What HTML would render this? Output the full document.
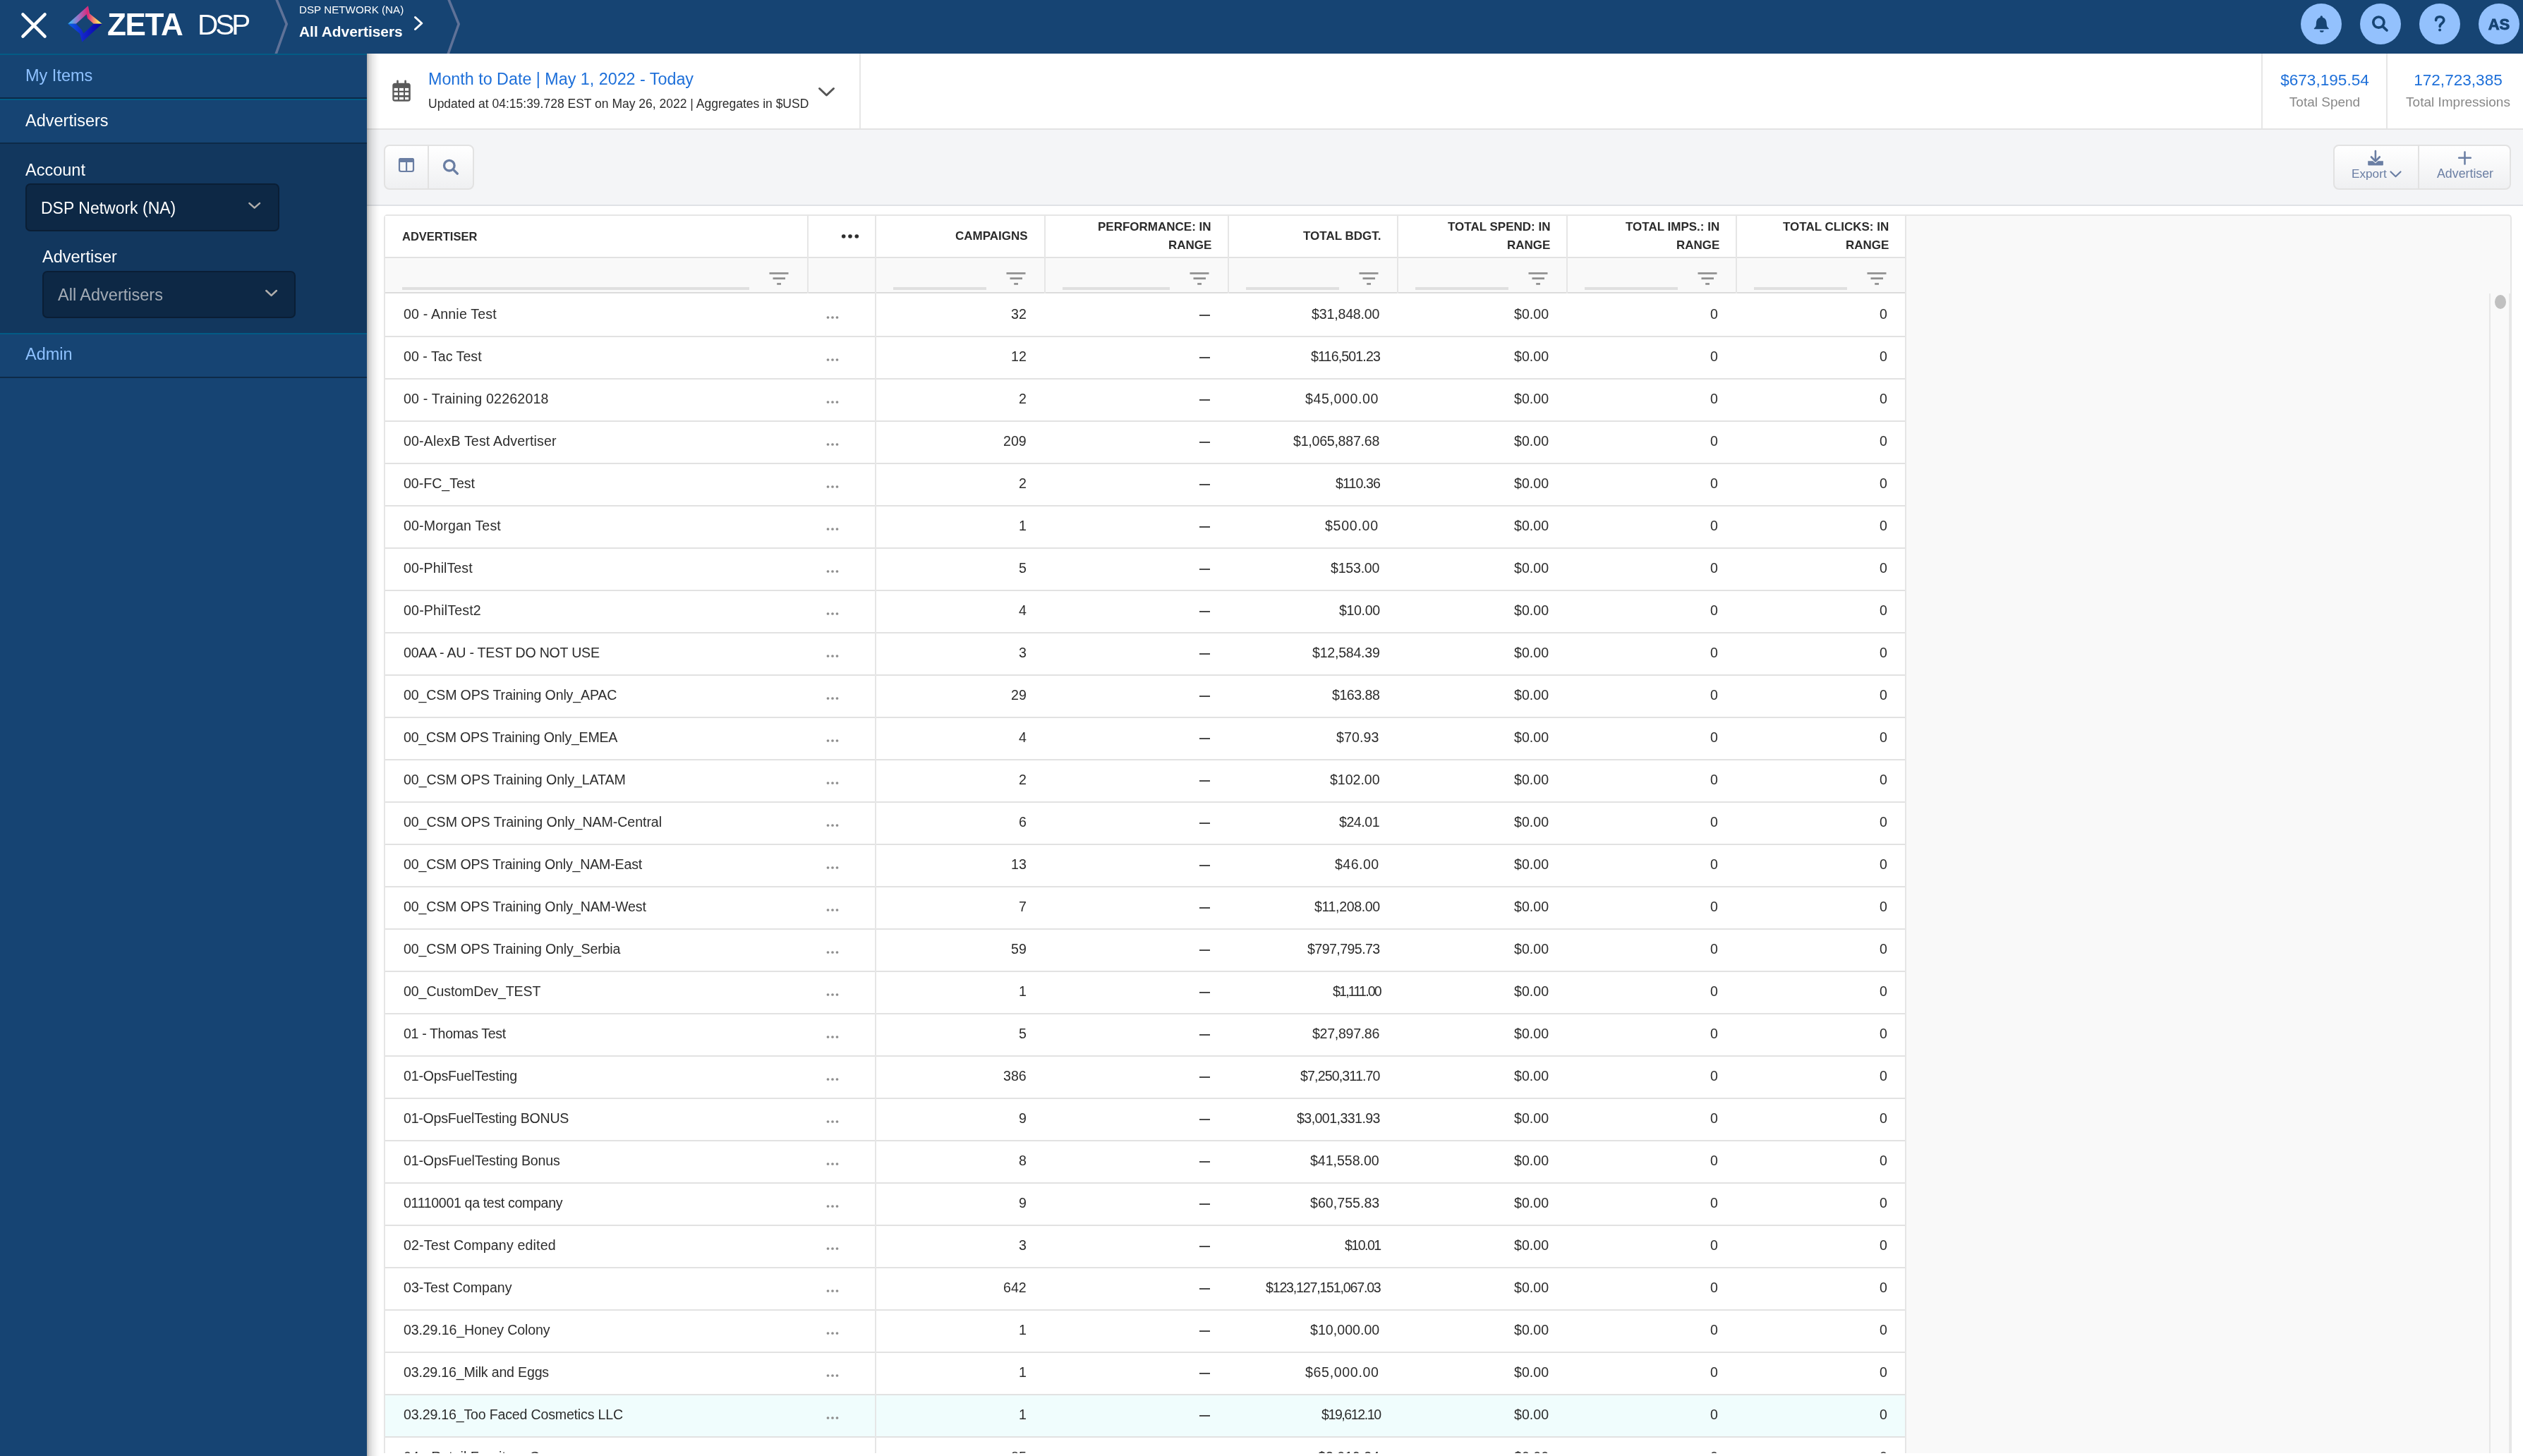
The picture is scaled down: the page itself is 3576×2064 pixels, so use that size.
<!DOCTYPE html><html><head><meta charset="utf-8"><style>
html,body{margin:0;padding:0;}
body{width:3576px;height:2064px;overflow:hidden;position:relative;background:#fff;font-family:"Liberation Sans", sans-serif;}
.t{position:absolute;white-space:nowrap;}
.r{position:absolute;}
svg{position:absolute;overflow:visible;}
.t{will-change:transform;}
</style></head><body>
<div class="r" style="left:0px;top:0px;width:3576px;height:76px;background:#164473;"></div>
<svg style="left:0;top:0" width="3576" height="76"><g stroke="#fff" stroke-width="4.4" stroke-linecap="round"><line x1="32.4" y1="20.4" x2="63.6" y2="51.6"/><line x1="63.6" y1="20.4" x2="32.4" y2="51.6"/></g><polyline points="391,-3 406.2,34 390.2,79" fill="none" stroke="#5f7298" stroke-width="3.6"/><polyline points="635,-3 650.2,34 634.2,79" fill="none" stroke="#5f7298" stroke-width="3.6"/><polyline points="588.5,24.5 597.8,33 588.5,41.5" fill="none" stroke="#fff" stroke-width="3" stroke-linecap="round" stroke-linejoin="round"/><defs><linearGradient id="gu" x1="96" y1="0" x2="145" y2="0" gradientUnits="userSpaceOnUse"><stop offset="0" stop-color="#2fc8ff"/><stop offset="0.3" stop-color="#9b74c8"/><stop offset="0.58" stop-color="#d8297a"/><stop offset="0.72" stop-color="#ee7a70"/><stop offset="0.9" stop-color="#ffe860"/><stop offset="1" stop-color="#fff860"/></linearGradient><linearGradient id="gd" x1="96" y1="0" x2="145" y2="0" gradientUnits="userSpaceOnUse"><stop offset="0" stop-color="#0a62e8"/><stop offset="0.45" stop-color="#1424c8"/><stop offset="1" stop-color="#0800a8"/></linearGradient></defs><polygon points="96.2,33.8 124.9,8.2 127,19.2 144.8,33.8 132.8,33.8 124,26 122.7,20.2 107.8,33.8" fill="url(#gu)"/><polygon points="96.2,33.8 107.8,33.8 115.5,41.8 118.4,47.6 132.8,33.8 144.8,33.8 116.4,59.6 113,47.6" fill="url(#gd)"/></svg>
<div class="t" style="left:152.00px;top:12.75px;font-size:44px;line-height:44px;color:#fff;font-weight:bold;letter-spacing:-1.3px;">ZETA</div>
<div class="t" style="left:280.00px;top:14.72px;font-size:40.5px;line-height:40.5px;color:#fff;letter-spacing:-4px;">DSP</div>
<div class="t" style="left:424.00px;top:6.13px;font-size:15.2px;line-height:15.2px;color:#fff;">DSP NETWORK (NA)</div>
<div class="t" style="left:424.00px;top:35.31px;font-size:20.9px;line-height:20.9px;color:#fff;font-weight:bold;">All Advertisers</div>
<div class="r" style="left:3261px;top:5px;width:58px;height:58px;border-radius:50%;background:#93c1fd;"></div>
<div class="r" style="left:3345px;top:5px;width:58px;height:58px;border-radius:50%;background:#93c1fd;"></div>
<div class="r" style="left:3429px;top:5px;width:58px;height:58px;border-radius:50%;background:#93c1fd;"></div>
<div class="r" style="left:3513px;top:5px;width:58px;height:58px;border-radius:50%;background:#93c1fd;"></div>
<svg style="left:0;top:0" width="3576" height="76"><path d="M3290.3,22.2 a1.7,1.7 0 0 1 1.7,1.7 v0.9 c3.6,0.9 5.4,3.9 5.6,7.6 l0.3,3.6 c0.2,1.6 1.4,2.9 2.9,4.2 a1,1 0 0 1 -0.6,1.1 h-19.8 a1,1 0 0 1 -0.6,-1.1 c1.5,-1.3 2.7,-2.6 2.9,-4.2 l0.3,-3.6 c0.2,-3.7 2,-6.7 5.6,-7.6 v-0.9 a1.7,1.7 0 0 1 1.7,-1.7 z" fill="#164473"/><path d="M3288,43.2 h5.6 a2.8,2.6 0 0 1 -5.6,0 z" fill="#164473"/><circle cx="3371.4" cy="31.6" r="7.6" fill="none" stroke="#164473" stroke-width="3.7"/><line x1="3377" y1="37.4" x2="3383" y2="43" stroke="#164473" stroke-width="3.7" stroke-linecap="round"/><path d="M3452.6,28.6 c0.2,-3.2 2.6,-4.8 5.6,-4.8 c3.2,0 5.6,1.9 5.6,4.8 c0,2.6 -1.6,3.7 -3.2,4.8 c-1.6,1.1 -2.4,2 -2.4,4.2" fill="none" stroke="#164473" stroke-width="3.6" stroke-linecap="round"/><circle cx="3458.1" cy="42.4" r="2" fill="#164473"/></svg>
<div class="t" style="left:3512.00px;width:60px;top:24.38px;font-size:22px;line-height:22px;color:#164473;text-align:center;font-weight:bold;-webkit-text-stroke:0.9px #164473;">AS</div>
<div class="r" style="left:0px;top:76px;width:520px;height:1988px;background:#164473;"></div>
<div class="r" style="left:0px;top:76px;width:520px;height:2px;background:#035b85;"></div>
<div class="r" style="left:0px;top:138px;width:520px;height:2px;background:#0d2a48;"></div>
<div class="r" style="left:0px;top:140px;width:520px;height:2px;background:#035b85;"></div>
<div class="r" style="left:0px;top:202px;width:520px;height:2px;background:#0d2a48;"></div>
<div class="r" style="left:0px;top:204px;width:520px;height:268px;background:#12375e;"></div>
<div class="r" style="left:0px;top:472px;width:520px;height:2px;background:#035b85;"></div>
<div class="r" style="left:0px;top:534px;width:520px;height:2px;background:#0d2a48;"></div>
<div class="t" style="left:36.00px;top:95.51px;font-size:23.5px;line-height:23.5px;color:#8ec1ff;">My Items</div>
<div class="t" style="left:36.00px;top:159.51px;font-size:23.5px;line-height:23.5px;color:#fff;">Advertisers</div>
<div class="t" style="left:36.00px;top:229.51px;font-size:23.5px;line-height:23.5px;color:#fff;">Account</div>
<div class="r" style="left:36px;top:260px;width:356px;height:64px;background:#0d2845;border:2px solid #0a1e35;border-radius:7px;"></div>
<div class="t" style="left:58.00px;top:283.83px;font-size:23px;line-height:23px;color:#fff;">DSP Network (NA)</div>
<div class="t" style="left:60.00px;top:353.11px;font-size:23.5px;line-height:23.5px;color:#fff;">Advertiser</div>
<div class="r" style="left:60px;top:384px;width:355px;height:63px;background:#0d2845;border:2px solid #0a1e35;border-radius:7px;"></div>
<div class="t" style="left:82.00px;top:407.11px;font-size:23.5px;line-height:23.5px;color:#a3abb5;">All Advertisers</div>
<div class="t" style="left:36.00px;top:491.11px;font-size:23.5px;line-height:23.5px;color:#8ec1ff;">Admin</div>
<svg style="left:0;top:0" width="520" height="600"><polyline points="353.4,288.1 360.7,294.6 368,288.1" fill="none" stroke="#b0aeac" stroke-width="2.5" stroke-linecap="round" stroke-linejoin="round"/><polyline points="377.3,412 384.6,418.9 391.9,412" fill="none" stroke="#b0aeac" stroke-width="2.5" stroke-linecap="round" stroke-linejoin="round"/></svg>
<div class="r" style="left:520px;top:76px;width:3056px;height:1988px;background:#fff;"></div>
<div class="r" style="left:520px;top:182px;width:3056px;height:2px;background:#e3e3e3;"></div>
<div class="r" style="left:1218px;top:76px;width:2px;height:106px;background:#e6e6e6;"></div>
<div class="r" style="left:3205px;top:76px;width:2px;height:106px;background:#e6e6e6;"></div>
<div class="r" style="left:3382px;top:76px;width:2px;height:106px;background:#e6e6e6;"></div>
<svg style="left:0;top:0" width="1300" height="300"><rect x="556.3" y="117.8" width="25.5" height="26" rx="3.5" fill="#5a5a5a"/><rect x="562.2" y="113.5" width="2.6" height="6" rx="1.3" fill="#5a5a5a"/><rect x="573.3" y="113.5" width="2.6" height="6" rx="1.3" fill="#5a5a5a"/><g fill="#fff"><rect x="558.6" y="124.9" width="5.3" height="3.8"/><rect x="566" y="124.9" width="6" height="3.8"/><rect x="574" y="124.9" width="5.2" height="3.8"/><rect x="558.6" y="131" width="5.3" height="4"/><rect x="566" y="131" width="6" height="4"/><rect x="574" y="131" width="5.2" height="4"/><rect x="558.6" y="137.8" width="5.3" height="3.4"/><rect x="566" y="137.8" width="6" height="3.4"/><rect x="574" y="137.8" width="5.2" height="3.4"/></g><polyline points="1161.5,125.5 1171.5,135 1181.5,125.5" fill="none" stroke="#555" stroke-width="3" stroke-linecap="round" stroke-linejoin="round"/></svg>
<div class="t" style="left:607.00px;top:100.98px;font-size:23.3px;line-height:23.3px;color:#1d6fd9;">Month to Date | May 1, 2022 - Today</div>
<div class="t" style="left:607.00px;top:138.79px;font-size:17.5px;line-height:17.5px;color:#2c2c2c;">Updated at 04:15:39.728 EST on May 26, 2022 | Aggregates in $USD</div>
<div class="t" style="left:3209.50px;width:170px;top:102.67px;font-size:22.6px;line-height:22.6px;color:#1d6fd9;text-align:center;">$673,195.54</div>
<div class="t" style="left:3209.50px;width:170px;top:134.72px;font-size:19px;line-height:19px;color:#888888;text-align:center;">Total Spend</div>
<div class="t" style="left:3389.00px;width:190px;top:102.67px;font-size:22.6px;line-height:22.6px;color:#1d6fd9;text-align:center;">172,723,385</div>
<div class="t" style="left:3389.00px;width:190px;top:134.72px;font-size:19px;line-height:19px;color:#888888;text-align:center;">Total Impressions</div>
<div class="r" style="left:520px;top:184px;width:3056px;height:106px;background:#f4f5f7;"></div>
<div class="r" style="left:520px;top:290px;width:3056px;height:2px;background:#dfe2e6;"></div>
<div class="r" style="left:544px;top:205px;width:124px;height:60px;border:2px solid #e2e2e2;border-radius:8px;background:linear-gradient(#ffffff,#eff0f2);"></div>
<div class="r" style="left:606px;top:207px;width:2px;height:60px;background:#e2e2e2;"></div>
<div class="r" style="left:3307px;top:205px;width:248px;height:60px;border:2px solid #e2e2e2;border-radius:8px;background:linear-gradient(#ffffff,#eff0f2);"></div>
<div class="r" style="left:3427px;top:207px;width:2px;height:60px;background:#e2e2e2;"></div>
<svg style="left:0;top:0" width="3576" height="300"><rect x="566" y="225" width="20" height="18" rx="2.5" fill="none" stroke="#6a7ea3" stroke-width="2.2"/><rect x="565" y="224" width="22" height="6" rx="2.5" fill="#6a7ea3"/><rect x="575" y="228" width="2.2" height="15" fill="#6a7ea3"/><circle cx="636.8" cy="234.7" r="7.3" fill="none" stroke="#6a7ea3" stroke-width="3.3"/><line x1="642.2" y1="240.1" x2="648.4" y2="246.2" stroke="#6a7ea3" stroke-width="3.3" stroke-linecap="round"/><line x1="3366.9" y1="214" x2="3366.9" y2="228" stroke="#6a7ea3" stroke-width="2.6" stroke-linecap="round"/><polyline points="3361,222.5 3366.9,228.5 3372.8,222.5" fill="none" stroke="#6a7ea3" stroke-width="2.6" stroke-linecap="round" stroke-linejoin="round"/><path d="M3356.2,228.2 h7 l3.7,3.2 l3.7,-3.2 h7.3 v5.4 a1,1 0 0 1 -1,1 h-19.7 a1,1 0 0 1 -1,-1 z" fill="#6a7ea3"/><polyline points="3388.5,243.5 3395.5,250.3 3402.5,243.5" fill="none" stroke="#6a7ea3" stroke-width="2.2" stroke-linecap="round" stroke-linejoin="round"/><line x1="3493.5" y1="215.5" x2="3493.5" y2="232.5" stroke="#6a7ea3" stroke-width="2.5" stroke-linecap="round"/><line x1="3485.2" y1="223.8" x2="3501.8" y2="223.8" stroke="#6a7ea3" stroke-width="2.5" stroke-linecap="round"/></svg>
<div class="t" style="left:3332.60px;top:238.24px;font-size:17.2px;line-height:17.2px;color:#6a7ea3;">Export</div>
<div class="t" style="left:3453.60px;top:238.23px;font-size:17.8px;line-height:17.8px;color:#6a7ea3;">Advertiser</div>
<div class="r" style="left:544px;top:304px;width:3012px;height:1760px;border:2px solid #e6e6e6;border-bottom:none;border-radius:5px 5px 0 0;background:#f9f9f9;overflow:hidden;"></div>
<div class="r" style="left:546px;top:306px;width:2155px;height:58px;background:#fff;"></div>
<div class="r" style="left:546px;top:364px;width:2155px;height:2px;background:#e2e2e2;"></div>
<div class="r" style="left:546px;top:366px;width:2155px;height:48px;background:#f9f9f9;"></div>
<div class="r" style="left:546px;top:414px;width:2155px;height:2px;background:#dcdcdc;"></div>
<div class="r" style="left:1144px;top:306px;width:2px;height:110px;background:#e6e6e6;"></div>
<div class="r" style="left:1240px;top:306px;width:2px;height:110px;background:#e6e6e6;"></div>
<div class="r" style="left:1480px;top:306px;width:2px;height:110px;background:#e6e6e6;"></div>
<div class="r" style="left:1740px;top:306px;width:2px;height:110px;background:#e6e6e6;"></div>
<div class="r" style="left:1980px;top:306px;width:2px;height:110px;background:#e6e6e6;"></div>
<div class="r" style="left:2220px;top:306px;width:2px;height:110px;background:#e6e6e6;"></div>
<div class="r" style="left:2460px;top:306px;width:2px;height:110px;background:#e6e6e6;"></div>
<div class="r" style="left:2700px;top:306px;width:2px;height:110px;background:#e6e6e6;"></div>
<div class="t" style="left:570.00px;top:326.73px;font-size:16.5px;line-height:16.5px;color:#2b2b2b;font-weight:bold;">ADVERTISER</div>
<svg style="left:0;top:0" width="1300" height="420"><circle cx="1195.7" cy="335" r="2.8" fill="#2e2e2e"/><circle cx="1205" cy="335" r="2.8" fill="#2e2e2e"/><circle cx="1214.3" cy="335" r="2.8" fill="#2e2e2e"/></svg>
<div class="t" style="right:2119.00px;top:326.31px;font-size:17px;line-height:17px;color:#2b2b2b;text-align:right;font-weight:bold;">CAMPAIGNS</div>
<div class="t" style="right:1859.00px;top:313.11px;font-size:17px;line-height:17px;color:#2b2b2b;text-align:right;font-weight:bold;">PERFORMANCE: IN</div>
<div class="t" style="right:1859.00px;top:339.11px;font-size:17px;line-height:17px;color:#2b2b2b;text-align:right;font-weight:bold;">RANGE</div>
<div class="t" style="right:1619.00px;top:326.31px;font-size:17px;line-height:17px;color:#2b2b2b;text-align:right;font-weight:bold;">TOTAL BDGT.</div>
<div class="t" style="right:1379.00px;top:313.11px;font-size:17px;line-height:17px;color:#2b2b2b;text-align:right;font-weight:bold;">TOTAL SPEND: IN</div>
<div class="t" style="right:1379.00px;top:339.11px;font-size:17px;line-height:17px;color:#2b2b2b;text-align:right;font-weight:bold;">RANGE</div>
<div class="t" style="right:1139.00px;top:313.11px;font-size:17px;line-height:17px;color:#2b2b2b;text-align:right;font-weight:bold;">TOTAL IMPS.: IN</div>
<div class="t" style="right:1139.00px;top:339.11px;font-size:17px;line-height:17px;color:#2b2b2b;text-align:right;font-weight:bold;">RANGE</div>
<div class="t" style="right:899.00px;top:313.11px;font-size:17px;line-height:17px;color:#2b2b2b;text-align:right;font-weight:bold;">TOTAL CLICKS: IN</div>
<div class="t" style="right:899.00px;top:339.11px;font-size:17px;line-height:17px;color:#2b2b2b;text-align:right;font-weight:bold;">RANGE</div>
<div class="r" style="left:570px;top:407px;width:492px;height:3.5px;background:#e0e0e0;"></div>
<div class="r" style="left:1266px;top:407px;width:132px;height:3.5px;background:#e0e0e0;"></div>
<div class="r" style="left:1506px;top:407px;width:152px;height:3.5px;background:#e0e0e0;"></div>
<div class="r" style="left:1766px;top:407px;width:132px;height:3.5px;background:#e0e0e0;"></div>
<div class="r" style="left:2006px;top:407px;width:132px;height:3.5px;background:#e0e0e0;"></div>
<div class="r" style="left:2246px;top:407px;width:132px;height:3.5px;background:#e0e0e0;"></div>
<div class="r" style="left:2486px;top:407px;width:132px;height:3.5px;background:#e0e0e0;"></div>
<svg style="left:0;top:0" width="2800" height="420"><g fill="#8f8f8f"><rect x="1090.5" y="386.1" width="27" height="2.7"/><rect x="1095.5" y="393.3" width="17.5" height="2.8"/><rect x="1101.2" y="401.1" width="5.8" height="2.7"/><rect x="1426.5" y="386.1" width="27" height="2.7"/><rect x="1431.5" y="393.3" width="17.5" height="2.8"/><rect x="1437.2" y="401.1" width="5.8" height="2.7"/><rect x="1686.5" y="386.1" width="27" height="2.7"/><rect x="1691.5" y="393.3" width="17.5" height="2.8"/><rect x="1697.2" y="401.1" width="5.8" height="2.7"/><rect x="1926.5" y="386.1" width="27" height="2.7"/><rect x="1931.5" y="393.3" width="17.5" height="2.8"/><rect x="1937.2" y="401.1" width="5.8" height="2.7"/><rect x="2166.5" y="386.1" width="27" height="2.7"/><rect x="2171.5" y="393.3" width="17.5" height="2.8"/><rect x="2177.2" y="401.1" width="5.8" height="2.7"/><rect x="2406.5" y="386.1" width="27" height="2.7"/><rect x="2411.5" y="393.3" width="17.5" height="2.8"/><rect x="2417.2" y="401.1" width="5.8" height="2.7"/><rect x="2646.5" y="386.1" width="27" height="2.7"/><rect x="2651.5" y="393.3" width="17.5" height="2.8"/><rect x="2657.2" y="401.1" width="5.8" height="2.7"/></g></svg>
<div class="r" style="left:546px;top:416px;width:2155px;height:60px;background:#fff;"></div>
<div class="r" style="left:546px;top:476px;width:2155px;height:2px;background:#e2e2e2;"></div>
<div class="t" style="left:572.00px;top:436.41px;font-size:19.6px;line-height:19.6px;color:#2c2c2c;letter-spacing:0.171px;">00 - Annie Test</div>
<div class="t" style="right:2121.00px;top:436.41px;font-size:19.6px;line-height:19.6px;color:#2c2c2c;text-align:right;">32</div>
<div class="r" style="left:1700px;top:446px;width:15px;height:2px;background:#4a4a4a;"></div>
<div class="t" style="right:1620.82px;top:436.41px;font-size:19.6px;line-height:19.6px;color:#2c2c2c;text-align:right;letter-spacing:-0.178px;">$31,848.00</div>
<div class="t" style="right:1381.00px;top:436.41px;font-size:19.6px;line-height:19.6px;color:#2c2c2c;text-align:right;">$0.00</div>
<div class="t" style="right:1141.00px;top:436.41px;font-size:19.6px;line-height:19.6px;color:#2c2c2c;text-align:right;">0</div>
<div class="t" style="right:901.00px;top:436.41px;font-size:19.6px;line-height:19.6px;color:#2c2c2c;text-align:right;">0</div>
<div class="r" style="left:546px;top:478px;width:2155px;height:58px;background:#fff;"></div>
<div class="r" style="left:546px;top:536px;width:2155px;height:2px;background:#e2e2e2;"></div>
<div class="t" style="left:572.00px;top:496.41px;font-size:19.6px;line-height:19.6px;color:#2c2c2c;letter-spacing:0.017px;">00 - Tac Test</div>
<div class="t" style="right:2121.00px;top:496.41px;font-size:19.6px;line-height:19.6px;color:#2c2c2c;text-align:right;">12</div>
<div class="r" style="left:1700px;top:506px;width:15px;height:2px;background:#4a4a4a;"></div>
<div class="t" style="right:1620.13px;top:496.41px;font-size:19.6px;line-height:19.6px;color:#2c2c2c;text-align:right;letter-spacing:-0.870px;">$116,501.23</div>
<div class="t" style="right:1381.00px;top:496.41px;font-size:19.6px;line-height:19.6px;color:#2c2c2c;text-align:right;">$0.00</div>
<div class="t" style="right:1141.00px;top:496.41px;font-size:19.6px;line-height:19.6px;color:#2c2c2c;text-align:right;">0</div>
<div class="t" style="right:901.00px;top:496.41px;font-size:19.6px;line-height:19.6px;color:#2c2c2c;text-align:right;">0</div>
<div class="r" style="left:546px;top:538px;width:2155px;height:58px;background:#fff;"></div>
<div class="r" style="left:546px;top:596px;width:2155px;height:2px;background:#e2e2e2;"></div>
<div class="t" style="left:572.00px;top:556.41px;font-size:19.6px;line-height:19.6px;color:#2c2c2c;letter-spacing:0.186px;">00 - Training 02262018</div>
<div class="t" style="right:2121.00px;top:556.41px;font-size:19.6px;line-height:19.6px;color:#2c2c2c;text-align:right;">2</div>
<div class="r" style="left:1700px;top:566px;width:15px;height:2px;background:#4a4a4a;"></div>
<div class="t" style="right:1621.59px;top:556.41px;font-size:19.6px;line-height:19.6px;color:#2c2c2c;text-align:right;letter-spacing:0.589px;">$45,000.00</div>
<div class="t" style="right:1381.00px;top:556.41px;font-size:19.6px;line-height:19.6px;color:#2c2c2c;text-align:right;">$0.00</div>
<div class="t" style="right:1141.00px;top:556.41px;font-size:19.6px;line-height:19.6px;color:#2c2c2c;text-align:right;">0</div>
<div class="t" style="right:901.00px;top:556.41px;font-size:19.6px;line-height:19.6px;color:#2c2c2c;text-align:right;">0</div>
<div class="r" style="left:546px;top:598px;width:2155px;height:58px;background:#fff;"></div>
<div class="r" style="left:546px;top:656px;width:2155px;height:2px;background:#e2e2e2;"></div>
<div class="t" style="left:572.00px;top:616.41px;font-size:19.6px;line-height:19.6px;color:#2c2c2c;letter-spacing:0.148px;">00-AlexB Test Advertiser</div>
<div class="t" style="right:2121.00px;top:616.41px;font-size:19.6px;line-height:19.6px;color:#2c2c2c;text-align:right;">209</div>
<div class="r" style="left:1700px;top:626px;width:15px;height:2px;background:#4a4a4a;"></div>
<div class="t" style="right:1620.75px;top:616.41px;font-size:19.6px;line-height:19.6px;color:#2c2c2c;text-align:right;letter-spacing:-0.250px;">$1,065,887.68</div>
<div class="t" style="right:1381.00px;top:616.41px;font-size:19.6px;line-height:19.6px;color:#2c2c2c;text-align:right;">$0.00</div>
<div class="t" style="right:1141.00px;top:616.41px;font-size:19.6px;line-height:19.6px;color:#2c2c2c;text-align:right;">0</div>
<div class="t" style="right:901.00px;top:616.41px;font-size:19.6px;line-height:19.6px;color:#2c2c2c;text-align:right;">0</div>
<div class="r" style="left:546px;top:658px;width:2155px;height:58px;background:#fff;"></div>
<div class="r" style="left:546px;top:716px;width:2155px;height:2px;background:#e2e2e2;"></div>
<div class="t" style="left:572.00px;top:676.41px;font-size:19.6px;line-height:19.6px;color:#2c2c2c;letter-spacing:-0.033px;">00-FC_Test</div>
<div class="t" style="right:2121.00px;top:676.41px;font-size:19.6px;line-height:19.6px;color:#2c2c2c;text-align:right;">2</div>
<div class="r" style="left:1700px;top:686px;width:15px;height:2px;background:#4a4a4a;"></div>
<div class="t" style="right:1620.07px;top:676.41px;font-size:19.6px;line-height:19.6px;color:#2c2c2c;text-align:right;letter-spacing:-0.933px;">$110.36</div>
<div class="t" style="right:1381.00px;top:676.41px;font-size:19.6px;line-height:19.6px;color:#2c2c2c;text-align:right;">$0.00</div>
<div class="t" style="right:1141.00px;top:676.41px;font-size:19.6px;line-height:19.6px;color:#2c2c2c;text-align:right;">0</div>
<div class="t" style="right:901.00px;top:676.41px;font-size:19.6px;line-height:19.6px;color:#2c2c2c;text-align:right;">0</div>
<div class="r" style="left:546px;top:718px;width:2155px;height:58px;background:#fff;"></div>
<div class="r" style="left:546px;top:776px;width:2155px;height:2px;background:#e2e2e2;"></div>
<div class="t" style="left:572.00px;top:736.41px;font-size:19.6px;line-height:19.6px;color:#2c2c2c;letter-spacing:0.154px;">00-Morgan Test</div>
<div class="t" style="right:2121.00px;top:736.41px;font-size:19.6px;line-height:19.6px;color:#2c2c2c;text-align:right;">1</div>
<div class="r" style="left:1700px;top:746px;width:15px;height:2px;background:#4a4a4a;"></div>
<div class="t" style="right:1621.72px;top:736.41px;font-size:19.6px;line-height:19.6px;color:#2c2c2c;text-align:right;letter-spacing:0.717px;">$500.00</div>
<div class="t" style="right:1381.00px;top:736.41px;font-size:19.6px;line-height:19.6px;color:#2c2c2c;text-align:right;">$0.00</div>
<div class="t" style="right:1141.00px;top:736.41px;font-size:19.6px;line-height:19.6px;color:#2c2c2c;text-align:right;">0</div>
<div class="t" style="right:901.00px;top:736.41px;font-size:19.6px;line-height:19.6px;color:#2c2c2c;text-align:right;">0</div>
<div class="r" style="left:546px;top:778px;width:2155px;height:58px;background:#fff;"></div>
<div class="r" style="left:546px;top:836px;width:2155px;height:2px;background:#e2e2e2;"></div>
<div class="t" style="left:572.00px;top:796.41px;font-size:19.6px;line-height:19.6px;color:#2c2c2c;letter-spacing:0.070px;">00-PhilTest</div>
<div class="t" style="right:2121.00px;top:796.41px;font-size:19.6px;line-height:19.6px;color:#2c2c2c;text-align:right;">5</div>
<div class="r" style="left:1700px;top:806px;width:15px;height:2px;background:#4a4a4a;"></div>
<div class="t" style="right:1620.77px;top:796.41px;font-size:19.6px;line-height:19.6px;color:#2c2c2c;text-align:right;letter-spacing:-0.233px;">$153.00</div>
<div class="t" style="right:1381.00px;top:796.41px;font-size:19.6px;line-height:19.6px;color:#2c2c2c;text-align:right;">$0.00</div>
<div class="t" style="right:1141.00px;top:796.41px;font-size:19.6px;line-height:19.6px;color:#2c2c2c;text-align:right;">0</div>
<div class="t" style="right:901.00px;top:796.41px;font-size:19.6px;line-height:19.6px;color:#2c2c2c;text-align:right;">0</div>
<div class="r" style="left:546px;top:838px;width:2155px;height:58px;background:#fff;"></div>
<div class="r" style="left:546px;top:896px;width:2155px;height:2px;background:#e2e2e2;"></div>
<div class="t" style="left:572.00px;top:856.41px;font-size:19.6px;line-height:19.6px;color:#2c2c2c;letter-spacing:0.173px;">00-PhilTest2</div>
<div class="t" style="right:2121.00px;top:856.41px;font-size:19.6px;line-height:19.6px;color:#2c2c2c;text-align:right;">4</div>
<div class="r" style="left:1700px;top:866px;width:15px;height:2px;background:#4a4a4a;"></div>
<div class="t" style="right:1620.64px;top:856.41px;font-size:19.6px;line-height:19.6px;color:#2c2c2c;text-align:right;letter-spacing:-0.360px;">$10.00</div>
<div class="t" style="right:1381.00px;top:856.41px;font-size:19.6px;line-height:19.6px;color:#2c2c2c;text-align:right;">$0.00</div>
<div class="t" style="right:1141.00px;top:856.41px;font-size:19.6px;line-height:19.6px;color:#2c2c2c;text-align:right;">0</div>
<div class="t" style="right:901.00px;top:856.41px;font-size:19.6px;line-height:19.6px;color:#2c2c2c;text-align:right;">0</div>
<div class="r" style="left:546px;top:898px;width:2155px;height:58px;background:#fff;"></div>
<div class="r" style="left:546px;top:956px;width:2155px;height:2px;background:#e2e2e2;"></div>
<div class="t" style="left:572.00px;top:916.41px;font-size:19.6px;line-height:19.6px;color:#2c2c2c;letter-spacing:-0.238px;">00AA - AU - TEST DO NOT USE</div>
<div class="t" style="right:2121.00px;top:916.41px;font-size:19.6px;line-height:19.6px;color:#2c2c2c;text-align:right;">3</div>
<div class="r" style="left:1700px;top:926px;width:15px;height:2px;background:#4a4a4a;"></div>
<div class="t" style="right:1620.76px;top:916.41px;font-size:19.6px;line-height:19.6px;color:#2c2c2c;text-align:right;letter-spacing:-0.244px;">$12,584.39</div>
<div class="t" style="right:1381.00px;top:916.41px;font-size:19.6px;line-height:19.6px;color:#2c2c2c;text-align:right;">$0.00</div>
<div class="t" style="right:1141.00px;top:916.41px;font-size:19.6px;line-height:19.6px;color:#2c2c2c;text-align:right;">0</div>
<div class="t" style="right:901.00px;top:916.41px;font-size:19.6px;line-height:19.6px;color:#2c2c2c;text-align:right;">0</div>
<div class="r" style="left:546px;top:958px;width:2155px;height:58px;background:#fff;"></div>
<div class="r" style="left:546px;top:1016px;width:2155px;height:2px;background:#e2e2e2;"></div>
<div class="t" style="left:572.00px;top:976.41px;font-size:19.6px;line-height:19.6px;color:#2c2c2c;letter-spacing:-0.154px;">00_CSM OPS Training Only_APAC</div>
<div class="t" style="right:2121.00px;top:976.41px;font-size:19.6px;line-height:19.6px;color:#2c2c2c;text-align:right;">29</div>
<div class="r" style="left:1700px;top:986px;width:15px;height:2px;background:#4a4a4a;"></div>
<div class="t" style="right:1620.50px;top:976.41px;font-size:19.6px;line-height:19.6px;color:#2c2c2c;text-align:right;letter-spacing:-0.500px;">$163.88</div>
<div class="t" style="right:1381.00px;top:976.41px;font-size:19.6px;line-height:19.6px;color:#2c2c2c;text-align:right;">$0.00</div>
<div class="t" style="right:1141.00px;top:976.41px;font-size:19.6px;line-height:19.6px;color:#2c2c2c;text-align:right;">0</div>
<div class="t" style="right:901.00px;top:976.41px;font-size:19.6px;line-height:19.6px;color:#2c2c2c;text-align:right;">0</div>
<div class="r" style="left:546px;top:1018px;width:2155px;height:58px;background:#fff;"></div>
<div class="r" style="left:546px;top:1076px;width:2155px;height:2px;background:#e2e2e2;"></div>
<div class="t" style="left:572.00px;top:1036.41px;font-size:19.6px;line-height:19.6px;color:#2c2c2c;letter-spacing:-0.250px;">00_CSM OPS Training Only_EMEA</div>
<div class="t" style="right:2121.00px;top:1036.41px;font-size:19.6px;line-height:19.6px;color:#2c2c2c;text-align:right;">4</div>
<div class="r" style="left:1700px;top:1046px;width:15px;height:2px;background:#4a4a4a;"></div>
<div class="t" style="right:1621.10px;top:1036.41px;font-size:19.6px;line-height:19.6px;color:#2c2c2c;text-align:right;letter-spacing:0.100px;">$70.93</div>
<div class="t" style="right:1381.00px;top:1036.41px;font-size:19.6px;line-height:19.6px;color:#2c2c2c;text-align:right;">$0.00</div>
<div class="t" style="right:1141.00px;top:1036.41px;font-size:19.6px;line-height:19.6px;color:#2c2c2c;text-align:right;">0</div>
<div class="t" style="right:901.00px;top:1036.41px;font-size:19.6px;line-height:19.6px;color:#2c2c2c;text-align:right;">0</div>
<div class="r" style="left:546px;top:1078px;width:2155px;height:58px;background:#fff;"></div>
<div class="r" style="left:546px;top:1136px;width:2155px;height:2px;background:#e2e2e2;"></div>
<div class="t" style="left:572.00px;top:1096.41px;font-size:19.6px;line-height:19.6px;color:#2c2c2c;letter-spacing:-0.083px;">00_CSM OPS Training Only_LATAM</div>
<div class="t" style="right:2121.00px;top:1096.41px;font-size:19.6px;line-height:19.6px;color:#2c2c2c;text-align:right;">2</div>
<div class="r" style="left:1700px;top:1106px;width:15px;height:2px;background:#4a4a4a;"></div>
<div class="t" style="right:1620.95px;top:1096.41px;font-size:19.6px;line-height:19.6px;color:#2c2c2c;text-align:right;letter-spacing:-0.050px;">$102.00</div>
<div class="t" style="right:1381.00px;top:1096.41px;font-size:19.6px;line-height:19.6px;color:#2c2c2c;text-align:right;">$0.00</div>
<div class="t" style="right:1141.00px;top:1096.41px;font-size:19.6px;line-height:19.6px;color:#2c2c2c;text-align:right;">0</div>
<div class="t" style="right:901.00px;top:1096.41px;font-size:19.6px;line-height:19.6px;color:#2c2c2c;text-align:right;">0</div>
<div class="r" style="left:546px;top:1138px;width:2155px;height:58px;background:#fff;"></div>
<div class="r" style="left:546px;top:1196px;width:2155px;height:2px;background:#e2e2e2;"></div>
<div class="t" style="left:572.00px;top:1156.41px;font-size:19.6px;line-height:19.6px;color:#2c2c2c;letter-spacing:-0.057px;">00_CSM OPS Training Only_NAM-Central</div>
<div class="t" style="right:2121.00px;top:1156.41px;font-size:19.6px;line-height:19.6px;color:#2c2c2c;text-align:right;">6</div>
<div class="r" style="left:1700px;top:1166px;width:15px;height:2px;background:#4a4a4a;"></div>
<div class="t" style="right:1620.52px;top:1156.41px;font-size:19.6px;line-height:19.6px;color:#2c2c2c;text-align:right;letter-spacing:-0.480px;">$24.01</div>
<div class="t" style="right:1381.00px;top:1156.41px;font-size:19.6px;line-height:19.6px;color:#2c2c2c;text-align:right;">$0.00</div>
<div class="t" style="right:1141.00px;top:1156.41px;font-size:19.6px;line-height:19.6px;color:#2c2c2c;text-align:right;">0</div>
<div class="t" style="right:901.00px;top:1156.41px;font-size:19.6px;line-height:19.6px;color:#2c2c2c;text-align:right;">0</div>
<div class="r" style="left:546px;top:1198px;width:2155px;height:58px;background:#fff;"></div>
<div class="r" style="left:546px;top:1256px;width:2155px;height:2px;background:#e2e2e2;"></div>
<div class="t" style="left:572.00px;top:1216.41px;font-size:19.6px;line-height:19.6px;color:#2c2c2c;letter-spacing:-0.184px;">00_CSM OPS Training Only_NAM-East</div>
<div class="t" style="right:2121.00px;top:1216.41px;font-size:19.6px;line-height:19.6px;color:#2c2c2c;text-align:right;">13</div>
<div class="r" style="left:1700px;top:1226px;width:15px;height:2px;background:#4a4a4a;"></div>
<div class="t" style="right:1621.44px;top:1216.41px;font-size:19.6px;line-height:19.6px;color:#2c2c2c;text-align:right;letter-spacing:0.440px;">$46.00</div>
<div class="t" style="right:1381.00px;top:1216.41px;font-size:19.6px;line-height:19.6px;color:#2c2c2c;text-align:right;">$0.00</div>
<div class="t" style="right:1141.00px;top:1216.41px;font-size:19.6px;line-height:19.6px;color:#2c2c2c;text-align:right;">0</div>
<div class="t" style="right:901.00px;top:1216.41px;font-size:19.6px;line-height:19.6px;color:#2c2c2c;text-align:right;">0</div>
<div class="r" style="left:546px;top:1258px;width:2155px;height:58px;background:#fff;"></div>
<div class="r" style="left:546px;top:1316px;width:2155px;height:2px;background:#e2e2e2;"></div>
<div class="t" style="left:572.00px;top:1276.41px;font-size:19.6px;line-height:19.6px;color:#2c2c2c;letter-spacing:-0.166px;">00_CSM OPS Training Only_NAM-West</div>
<div class="t" style="right:2121.00px;top:1276.41px;font-size:19.6px;line-height:19.6px;color:#2c2c2c;text-align:right;">7</div>
<div class="r" style="left:1700px;top:1286px;width:15px;height:2px;background:#4a4a4a;"></div>
<div class="t" style="right:1620.62px;top:1276.41px;font-size:19.6px;line-height:19.6px;color:#2c2c2c;text-align:right;letter-spacing:-0.378px;">$11,208.00</div>
<div class="t" style="right:1381.00px;top:1276.41px;font-size:19.6px;line-height:19.6px;color:#2c2c2c;text-align:right;">$0.00</div>
<div class="t" style="right:1141.00px;top:1276.41px;font-size:19.6px;line-height:19.6px;color:#2c2c2c;text-align:right;">0</div>
<div class="t" style="right:901.00px;top:1276.41px;font-size:19.6px;line-height:19.6px;color:#2c2c2c;text-align:right;">0</div>
<div class="r" style="left:546px;top:1318px;width:2155px;height:58px;background:#fff;"></div>
<div class="r" style="left:546px;top:1376px;width:2155px;height:2px;background:#e2e2e2;"></div>
<div class="t" style="left:572.00px;top:1336.41px;font-size:19.6px;line-height:19.6px;color:#2c2c2c;letter-spacing:-0.133px;">00_CSM OPS Training Only_Serbia</div>
<div class="t" style="right:2121.00px;top:1336.41px;font-size:19.6px;line-height:19.6px;color:#2c2c2c;text-align:right;">59</div>
<div class="r" style="left:1700px;top:1346px;width:15px;height:2px;background:#4a4a4a;"></div>
<div class="t" style="right:1620.43px;top:1336.41px;font-size:19.6px;line-height:19.6px;color:#2c2c2c;text-align:right;letter-spacing:-0.570px;">$797,795.73</div>
<div class="t" style="right:1381.00px;top:1336.41px;font-size:19.6px;line-height:19.6px;color:#2c2c2c;text-align:right;">$0.00</div>
<div class="t" style="right:1141.00px;top:1336.41px;font-size:19.6px;line-height:19.6px;color:#2c2c2c;text-align:right;">0</div>
<div class="t" style="right:901.00px;top:1336.41px;font-size:19.6px;line-height:19.6px;color:#2c2c2c;text-align:right;">0</div>
<div class="r" style="left:546px;top:1378px;width:2155px;height:58px;background:#fff;"></div>
<div class="r" style="left:546px;top:1436px;width:2155px;height:2px;background:#e2e2e2;"></div>
<div class="t" style="left:572.00px;top:1396.41px;font-size:19.6px;line-height:19.6px;color:#2c2c2c;letter-spacing:-0.094px;">00_CustomDev_TEST</div>
<div class="t" style="right:2121.00px;top:1396.41px;font-size:19.6px;line-height:19.6px;color:#2c2c2c;text-align:right;">1</div>
<div class="r" style="left:1700px;top:1406px;width:15px;height:2px;background:#4a4a4a;"></div>
<div class="t" style="right:1619.19px;top:1396.41px;font-size:19.6px;line-height:19.6px;color:#2c2c2c;text-align:right;letter-spacing:-1.812px;">$1,111.00</div>
<div class="t" style="right:1381.00px;top:1396.41px;font-size:19.6px;line-height:19.6px;color:#2c2c2c;text-align:right;">$0.00</div>
<div class="t" style="right:1141.00px;top:1396.41px;font-size:19.6px;line-height:19.6px;color:#2c2c2c;text-align:right;">0</div>
<div class="t" style="right:901.00px;top:1396.41px;font-size:19.6px;line-height:19.6px;color:#2c2c2c;text-align:right;">0</div>
<div class="r" style="left:546px;top:1438px;width:2155px;height:58px;background:#fff;"></div>
<div class="r" style="left:546px;top:1496px;width:2155px;height:2px;background:#e2e2e2;"></div>
<div class="t" style="left:572.00px;top:1456.41px;font-size:19.6px;line-height:19.6px;color:#2c2c2c;letter-spacing:-0.367px;">01 - Thomas Test</div>
<div class="t" style="right:2121.00px;top:1456.41px;font-size:19.6px;line-height:19.6px;color:#2c2c2c;text-align:right;">5</div>
<div class="r" style="left:1700px;top:1466px;width:15px;height:2px;background:#4a4a4a;"></div>
<div class="t" style="right:1620.70px;top:1456.41px;font-size:19.6px;line-height:19.6px;color:#2c2c2c;text-align:right;letter-spacing:-0.300px;">$27,897.86</div>
<div class="t" style="right:1381.00px;top:1456.41px;font-size:19.6px;line-height:19.6px;color:#2c2c2c;text-align:right;">$0.00</div>
<div class="t" style="right:1141.00px;top:1456.41px;font-size:19.6px;line-height:19.6px;color:#2c2c2c;text-align:right;">0</div>
<div class="t" style="right:901.00px;top:1456.41px;font-size:19.6px;line-height:19.6px;color:#2c2c2c;text-align:right;">0</div>
<div class="r" style="left:546px;top:1498px;width:2155px;height:58px;background:#fff;"></div>
<div class="r" style="left:546px;top:1556px;width:2155px;height:2px;background:#e2e2e2;"></div>
<div class="t" style="left:572.00px;top:1516.41px;font-size:19.6px;line-height:19.6px;color:#2c2c2c;letter-spacing:-0.206px;">01-OpsFuelTesting</div>
<div class="t" style="right:2121.00px;top:1516.41px;font-size:19.6px;line-height:19.6px;color:#2c2c2c;text-align:right;">386</div>
<div class="r" style="left:1700px;top:1526px;width:15px;height:2px;background:#4a4a4a;"></div>
<div class="t" style="right:1620.13px;top:1516.41px;font-size:19.6px;line-height:19.6px;color:#2c2c2c;text-align:right;letter-spacing:-0.867px;">$7,250,311.70</div>
<div class="t" style="right:1381.00px;top:1516.41px;font-size:19.6px;line-height:19.6px;color:#2c2c2c;text-align:right;">$0.00</div>
<div class="t" style="right:1141.00px;top:1516.41px;font-size:19.6px;line-height:19.6px;color:#2c2c2c;text-align:right;">0</div>
<div class="t" style="right:901.00px;top:1516.41px;font-size:19.6px;line-height:19.6px;color:#2c2c2c;text-align:right;">0</div>
<div class="r" style="left:546px;top:1558px;width:2155px;height:58px;background:#fff;"></div>
<div class="r" style="left:546px;top:1616px;width:2155px;height:2px;background:#e2e2e2;"></div>
<div class="t" style="left:572.00px;top:1576.41px;font-size:19.6px;line-height:19.6px;color:#2c2c2c;letter-spacing:-0.236px;">01-OpsFuelTesting BONUS</div>
<div class="t" style="right:2121.00px;top:1576.41px;font-size:19.6px;line-height:19.6px;color:#2c2c2c;text-align:right;">9</div>
<div class="r" style="left:1700px;top:1586px;width:15px;height:2px;background:#4a4a4a;"></div>
<div class="t" style="right:1620.43px;top:1576.41px;font-size:19.6px;line-height:19.6px;color:#2c2c2c;text-align:right;letter-spacing:-0.567px;">$3,001,331.93</div>
<div class="t" style="right:1381.00px;top:1576.41px;font-size:19.6px;line-height:19.6px;color:#2c2c2c;text-align:right;">$0.00</div>
<div class="t" style="right:1141.00px;top:1576.41px;font-size:19.6px;line-height:19.6px;color:#2c2c2c;text-align:right;">0</div>
<div class="t" style="right:901.00px;top:1576.41px;font-size:19.6px;line-height:19.6px;color:#2c2c2c;text-align:right;">0</div>
<div class="r" style="left:546px;top:1618px;width:2155px;height:58px;background:#fff;"></div>
<div class="r" style="left:546px;top:1676px;width:2155px;height:2px;background:#e2e2e2;"></div>
<div class="t" style="left:572.00px;top:1636.41px;font-size:19.6px;line-height:19.6px;color:#2c2c2c;letter-spacing:-0.164px;">01-OpsFuelTesting Bonus</div>
<div class="t" style="right:2121.00px;top:1636.41px;font-size:19.6px;line-height:19.6px;color:#2c2c2c;text-align:right;">8</div>
<div class="r" style="left:1700px;top:1646px;width:15px;height:2px;background:#4a4a4a;"></div>
<div class="t" style="right:1620.96px;top:1636.41px;font-size:19.6px;line-height:19.6px;color:#2c2c2c;text-align:right;letter-spacing:-0.044px;">$41,558.00</div>
<div class="t" style="right:1381.00px;top:1636.41px;font-size:19.6px;line-height:19.6px;color:#2c2c2c;text-align:right;">$0.00</div>
<div class="t" style="right:1141.00px;top:1636.41px;font-size:19.6px;line-height:19.6px;color:#2c2c2c;text-align:right;">0</div>
<div class="t" style="right:901.00px;top:1636.41px;font-size:19.6px;line-height:19.6px;color:#2c2c2c;text-align:right;">0</div>
<div class="r" style="left:546px;top:1678px;width:2155px;height:58px;background:#fff;"></div>
<div class="r" style="left:546px;top:1736px;width:2155px;height:2px;background:#e2e2e2;"></div>
<div class="t" style="left:572.00px;top:1696.41px;font-size:19.6px;line-height:19.6px;color:#2c2c2c;letter-spacing:-0.348px;">01110001 qa test company</div>
<div class="t" style="right:2121.00px;top:1696.41px;font-size:19.6px;line-height:19.6px;color:#2c2c2c;text-align:right;">9</div>
<div class="r" style="left:1700px;top:1706px;width:15px;height:2px;background:#4a4a4a;"></div>
<div class="t" style="right:1621.02px;top:1696.41px;font-size:19.6px;line-height:19.6px;color:#2c2c2c;text-align:right;letter-spacing:0.022px;">$60,755.83</div>
<div class="t" style="right:1381.00px;top:1696.41px;font-size:19.6px;line-height:19.6px;color:#2c2c2c;text-align:right;">$0.00</div>
<div class="t" style="right:1141.00px;top:1696.41px;font-size:19.6px;line-height:19.6px;color:#2c2c2c;text-align:right;">0</div>
<div class="t" style="right:901.00px;top:1696.41px;font-size:19.6px;line-height:19.6px;color:#2c2c2c;text-align:right;">0</div>
<div class="r" style="left:546px;top:1738px;width:2155px;height:58px;background:#fff;"></div>
<div class="r" style="left:546px;top:1796px;width:2155px;height:2px;background:#e2e2e2;"></div>
<div class="t" style="left:572.00px;top:1756.41px;font-size:19.6px;line-height:19.6px;color:#2c2c2c;letter-spacing:0.152px;">02-Test Company edited</div>
<div class="t" style="right:2121.00px;top:1756.41px;font-size:19.6px;line-height:19.6px;color:#2c2c2c;text-align:right;">3</div>
<div class="r" style="left:1700px;top:1766px;width:15px;height:2px;background:#4a4a4a;"></div>
<div class="t" style="right:1619.46px;top:1756.41px;font-size:19.6px;line-height:19.6px;color:#2c2c2c;text-align:right;letter-spacing:-1.540px;">$10.01</div>
<div class="t" style="right:1381.00px;top:1756.41px;font-size:19.6px;line-height:19.6px;color:#2c2c2c;text-align:right;">$0.00</div>
<div class="t" style="right:1141.00px;top:1756.41px;font-size:19.6px;line-height:19.6px;color:#2c2c2c;text-align:right;">0</div>
<div class="t" style="right:901.00px;top:1756.41px;font-size:19.6px;line-height:19.6px;color:#2c2c2c;text-align:right;">0</div>
<div class="r" style="left:546px;top:1798px;width:2155px;height:58px;background:#fff;"></div>
<div class="r" style="left:546px;top:1856px;width:2155px;height:2px;background:#e2e2e2;"></div>
<div class="t" style="left:572.00px;top:1816.41px;font-size:19.6px;line-height:19.6px;color:#2c2c2c;letter-spacing:-0.007px;">03-Test Company</div>
<div class="t" style="right:2121.00px;top:1816.41px;font-size:19.6px;line-height:19.6px;color:#2c2c2c;text-align:right;">642</div>
<div class="r" style="left:1700px;top:1826px;width:15px;height:2px;background:#4a4a4a;"></div>
<div class="t" style="right:1619.81px;top:1816.41px;font-size:19.6px;line-height:19.6px;color:#2c2c2c;text-align:right;letter-spacing:-1.194px;">$123,127,151,067.03</div>
<div class="t" style="right:1381.00px;top:1816.41px;font-size:19.6px;line-height:19.6px;color:#2c2c2c;text-align:right;">$0.00</div>
<div class="t" style="right:1141.00px;top:1816.41px;font-size:19.6px;line-height:19.6px;color:#2c2c2c;text-align:right;">0</div>
<div class="t" style="right:901.00px;top:1816.41px;font-size:19.6px;line-height:19.6px;color:#2c2c2c;text-align:right;">0</div>
<div class="r" style="left:546px;top:1858px;width:2155px;height:58px;background:#fff;"></div>
<div class="r" style="left:546px;top:1916px;width:2155px;height:2px;background:#e2e2e2;"></div>
<div class="t" style="left:572.00px;top:1876.41px;font-size:19.6px;line-height:19.6px;color:#2c2c2c;letter-spacing:-0.140px;">03.29.16_Honey Colony</div>
<div class="t" style="right:2121.00px;top:1876.41px;font-size:19.6px;line-height:19.6px;color:#2c2c2c;text-align:right;">1</div>
<div class="r" style="left:1700px;top:1886px;width:15px;height:2px;background:#4a4a4a;"></div>
<div class="t" style="right:1621.02px;top:1876.41px;font-size:19.6px;line-height:19.6px;color:#2c2c2c;text-align:right;letter-spacing:0.022px;">$10,000.00</div>
<div class="t" style="right:1381.00px;top:1876.41px;font-size:19.6px;line-height:19.6px;color:#2c2c2c;text-align:right;">$0.00</div>
<div class="t" style="right:1141.00px;top:1876.41px;font-size:19.6px;line-height:19.6px;color:#2c2c2c;text-align:right;">0</div>
<div class="t" style="right:901.00px;top:1876.41px;font-size:19.6px;line-height:19.6px;color:#2c2c2c;text-align:right;">0</div>
<div class="r" style="left:546px;top:1918px;width:2155px;height:58px;background:#fff;"></div>
<div class="r" style="left:546px;top:1976px;width:2155px;height:2px;background:#e2e2e2;"></div>
<div class="t" style="left:572.00px;top:1936.41px;font-size:19.6px;line-height:19.6px;color:#2c2c2c;letter-spacing:-0.195px;">03.29.16_Milk and Eggs</div>
<div class="t" style="right:2121.00px;top:1936.41px;font-size:19.6px;line-height:19.6px;color:#2c2c2c;text-align:right;">1</div>
<div class="r" style="left:1700px;top:1946px;width:15px;height:2px;background:#4a4a4a;"></div>
<div class="t" style="right:1621.66px;top:1936.41px;font-size:19.6px;line-height:19.6px;color:#2c2c2c;text-align:right;letter-spacing:0.656px;">$65,000.00</div>
<div class="t" style="right:1381.00px;top:1936.41px;font-size:19.6px;line-height:19.6px;color:#2c2c2c;text-align:right;">$0.00</div>
<div class="t" style="right:1141.00px;top:1936.41px;font-size:19.6px;line-height:19.6px;color:#2c2c2c;text-align:right;">0</div>
<div class="t" style="right:901.00px;top:1936.41px;font-size:19.6px;line-height:19.6px;color:#2c2c2c;text-align:right;">0</div>
<div class="r" style="left:546px;top:1978px;width:2155px;height:58px;background:#f0fdfd;"></div>
<div class="r" style="left:546px;top:2036px;width:2155px;height:2px;background:#e2e2e2;"></div>
<div class="t" style="left:572.00px;top:1996.41px;font-size:19.6px;line-height:19.6px;color:#2c2c2c;letter-spacing:-0.190px;">03.29.16_Too Faced Cosmetics LLC</div>
<div class="t" style="right:2121.00px;top:1996.41px;font-size:19.6px;line-height:19.6px;color:#2c2c2c;text-align:right;">1</div>
<div class="r" style="left:1700px;top:2006px;width:15px;height:2px;background:#4a4a4a;"></div>
<div class="t" style="right:1619.56px;top:1996.41px;font-size:19.6px;line-height:19.6px;color:#2c2c2c;text-align:right;letter-spacing:-1.444px;">$19,612.10</div>
<div class="t" style="right:1381.00px;top:1996.41px;font-size:19.6px;line-height:19.6px;color:#2c2c2c;text-align:right;">$0.00</div>
<div class="t" style="right:1141.00px;top:1996.41px;font-size:19.6px;line-height:19.6px;color:#2c2c2c;text-align:right;">0</div>
<div class="t" style="right:901.00px;top:1996.41px;font-size:19.6px;line-height:19.6px;color:#2c2c2c;text-align:right;">0</div>
<div class="r" style="left:546px;top:2038px;width:2155px;height:58px;background:#fff;"></div>
<div class="r" style="left:546px;top:2096px;width:2155px;height:2px;background:#e2e2e2;"></div>
<div class="t" style="left:572.00px;top:2056.41px;font-size:19.6px;line-height:19.6px;color:#2c2c2c;letter-spacing:0.000px;">04 - Retail Furniture Co</div>
<div class="t" style="right:2121.00px;top:2056.41px;font-size:19.6px;line-height:19.6px;color:#2c2c2c;text-align:right;">85</div>
<div class="r" style="left:1700px;top:2066px;width:15px;height:2px;background:#4a4a4a;"></div>
<div class="t" style="right:1621.00px;top:2056.41px;font-size:19.6px;line-height:19.6px;color:#2c2c2c;text-align:right;letter-spacing:0.000px;">$3,019.34</div>
<div class="t" style="right:1381.00px;top:2056.41px;font-size:19.6px;line-height:19.6px;color:#2c2c2c;text-align:right;">$0.00</div>
<div class="t" style="right:1141.00px;top:2056.41px;font-size:19.6px;line-height:19.6px;color:#2c2c2c;text-align:right;">0</div>
<div class="t" style="right:901.00px;top:2056.41px;font-size:19.6px;line-height:19.6px;color:#2c2c2c;text-align:right;">0</div>
<svg style="left:0;top:0" width="1300" height="2100"><g fill="#8e8e8e"><circle cx="1173.5" cy="450" r="1.85"/><circle cx="1180" cy="450" r="1.85"/><circle cx="1186.5" cy="450" r="1.85"/><circle cx="1173.5" cy="510" r="1.85"/><circle cx="1180" cy="510" r="1.85"/><circle cx="1186.5" cy="510" r="1.85"/><circle cx="1173.5" cy="570" r="1.85"/><circle cx="1180" cy="570" r="1.85"/><circle cx="1186.5" cy="570" r="1.85"/><circle cx="1173.5" cy="630" r="1.85"/><circle cx="1180" cy="630" r="1.85"/><circle cx="1186.5" cy="630" r="1.85"/><circle cx="1173.5" cy="690" r="1.85"/><circle cx="1180" cy="690" r="1.85"/><circle cx="1186.5" cy="690" r="1.85"/><circle cx="1173.5" cy="750" r="1.85"/><circle cx="1180" cy="750" r="1.85"/><circle cx="1186.5" cy="750" r="1.85"/><circle cx="1173.5" cy="810" r="1.85"/><circle cx="1180" cy="810" r="1.85"/><circle cx="1186.5" cy="810" r="1.85"/><circle cx="1173.5" cy="870" r="1.85"/><circle cx="1180" cy="870" r="1.85"/><circle cx="1186.5" cy="870" r="1.85"/><circle cx="1173.5" cy="930" r="1.85"/><circle cx="1180" cy="930" r="1.85"/><circle cx="1186.5" cy="930" r="1.85"/><circle cx="1173.5" cy="990" r="1.85"/><circle cx="1180" cy="990" r="1.85"/><circle cx="1186.5" cy="990" r="1.85"/><circle cx="1173.5" cy="1050" r="1.85"/><circle cx="1180" cy="1050" r="1.85"/><circle cx="1186.5" cy="1050" r="1.85"/><circle cx="1173.5" cy="1110" r="1.85"/><circle cx="1180" cy="1110" r="1.85"/><circle cx="1186.5" cy="1110" r="1.85"/><circle cx="1173.5" cy="1170" r="1.85"/><circle cx="1180" cy="1170" r="1.85"/><circle cx="1186.5" cy="1170" r="1.85"/><circle cx="1173.5" cy="1230" r="1.85"/><circle cx="1180" cy="1230" r="1.85"/><circle cx="1186.5" cy="1230" r="1.85"/><circle cx="1173.5" cy="1290" r="1.85"/><circle cx="1180" cy="1290" r="1.85"/><circle cx="1186.5" cy="1290" r="1.85"/><circle cx="1173.5" cy="1350" r="1.85"/><circle cx="1180" cy="1350" r="1.85"/><circle cx="1186.5" cy="1350" r="1.85"/><circle cx="1173.5" cy="1410" r="1.85"/><circle cx="1180" cy="1410" r="1.85"/><circle cx="1186.5" cy="1410" r="1.85"/><circle cx="1173.5" cy="1470" r="1.85"/><circle cx="1180" cy="1470" r="1.85"/><circle cx="1186.5" cy="1470" r="1.85"/><circle cx="1173.5" cy="1530" r="1.85"/><circle cx="1180" cy="1530" r="1.85"/><circle cx="1186.5" cy="1530" r="1.85"/><circle cx="1173.5" cy="1590" r="1.85"/><circle cx="1180" cy="1590" r="1.85"/><circle cx="1186.5" cy="1590" r="1.85"/><circle cx="1173.5" cy="1650" r="1.85"/><circle cx="1180" cy="1650" r="1.85"/><circle cx="1186.5" cy="1650" r="1.85"/><circle cx="1173.5" cy="1710" r="1.85"/><circle cx="1180" cy="1710" r="1.85"/><circle cx="1186.5" cy="1710" r="1.85"/><circle cx="1173.5" cy="1770" r="1.85"/><circle cx="1180" cy="1770" r="1.85"/><circle cx="1186.5" cy="1770" r="1.85"/><circle cx="1173.5" cy="1830" r="1.85"/><circle cx="1180" cy="1830" r="1.85"/><circle cx="1186.5" cy="1830" r="1.85"/><circle cx="1173.5" cy="1890" r="1.85"/><circle cx="1180" cy="1890" r="1.85"/><circle cx="1186.5" cy="1890" r="1.85"/><circle cx="1173.5" cy="1950" r="1.85"/><circle cx="1180" cy="1950" r="1.85"/><circle cx="1186.5" cy="1950" r="1.85"/><circle cx="1173.5" cy="2010" r="1.85"/><circle cx="1180" cy="2010" r="1.85"/><circle cx="1186.5" cy="2010" r="1.85"/><circle cx="1173.5" cy="2070" r="1.85"/><circle cx="1180" cy="2070" r="1.85"/><circle cx="1186.5" cy="2070" r="1.85"/></g></svg>
<div class="r" style="left:1240px;top:416px;width:2px;height:1660px;background:#e6e6e6;"></div>
<div class="r" style="left:2700px;top:306px;width:2px;height:1760px;background:#e6e6e6;"></div>
<div class="r" style="left:3528px;top:416px;width:2px;height:1660px;background:#e8e8e8;"></div>
<div class="r" style="left:3556px;top:416px;width:2px;height:1660px;background:#e8e8e8;"></div>
<div class="r" style="left:3536px;top:418px;width:16px;height:20px;border-radius:50%;background:#c0c0c0;"></div>
<div class="r" style="left:520px;top:2060px;width:3056px;height:4px;background:#fff;"></div>
<div class="r" style="left:520px;top:76px;width:26px;height:1988px;background:linear-gradient(to right, rgba(0,0,0,0.30), rgba(0,0,0,0.17) 12%, rgba(0,0,0,0.09) 30%, rgba(0,0,0,0.03) 52%, rgba(0,0,0,0) 70%);"></div>
</body></html>
